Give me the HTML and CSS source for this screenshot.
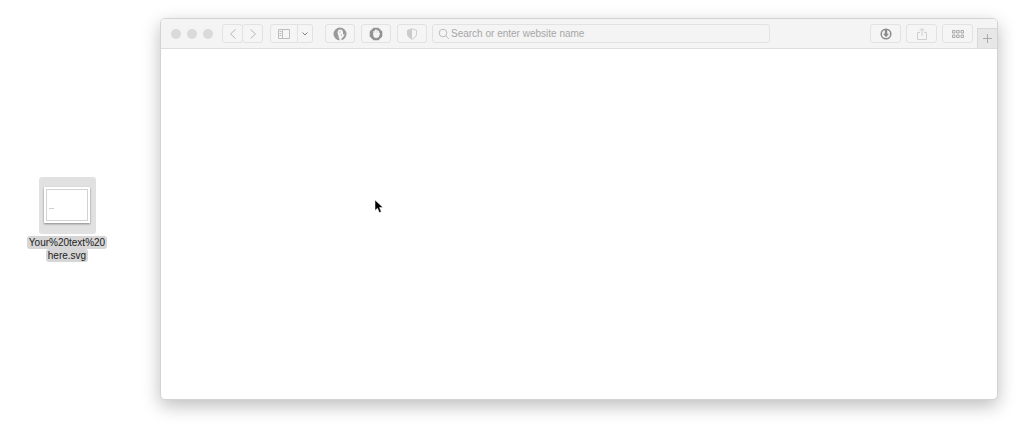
FILE: index.html
```
<!DOCTYPE html>
<html lang="en">
<head>
  <meta charset="UTF-8">
  <meta name="viewport" content="width=device-width, initial-scale=1.0">
  <title>Desktop</title>
  <link rel="stylesheet" href="styles.css">
</head>
<body>

  <aside class="desktop">
    <a class="file" href="#">
      <span class="file-icon">
        <svg width="46" height="36" viewBox="0 0 46 36">
          <rect width="46" height="36" fill="#fff"/>
          <rect x="2.5" y="2.5" width="41" height="31" fill="none" stroke="#d2d2d2"/>
          <path d="M5 21.5h5" stroke="#d0d0d0"/>
        </svg>
      </span>
      <span class="file-name"><span>Your%20text%20<br>here.svg</span></span>
    </a>
  </aside>

  <main class="window">
    <header class="toolbar">
      <div class="lights"><i></i><i></i><i></i></div>

      <div class="group nav">
        <button aria-label="Back"><svg width="18" height="16" viewBox="0 0 18 16"><path d="M11.5 3.500L6.500 8l5 4.500"/></svg></button>
        <button aria-label="Forward"><svg width="18" height="16" viewBox="0 0 18 16"><path d="M6.500 3.500l5 4.500-5 4.500"/></svg></button>
      </div>

      <div class="group split">
        <button class="sidebar" aria-label="Sidebar"><svg width="14" height="12" viewBox="0 0 14 12"><path d="M1.5 1.5h11v9h-11zM5.5 1.5v9M2.5 3.5h2M2.5 5.5h2M2.5 7.5h2"/></svg></button>
        <button class="arrow" aria-label="Sidebar options"><svg width="8" height="6" viewBox="0 0 8 6"><path d="M1.5 1.5L4 4l2.5-2.5"/></svg></button>
      </div>

      <div class="extensions">
        <button aria-label="Privacy">
          <svg width="14" height="14" viewBox="0 0 14 14">
            <circle cx="7" cy="7" r="5.500" stroke="#999" stroke-width="2"/>
            <path d="M2 4.500C3 2 5 1.500 6.500 2L5 3.500 4.500 6l1 3 .5 4C3 12 1.500 9 2 4.500z" fill="#999" stroke="none"/>
            <path d="M9 2.500c2 1 3 2.500 3.200 4.500l-2.200.5V5zM10 9.500l2 .5-2 2z" fill="#999" stroke="none"/>
            <path d="M6.500 5h1M8.500 7.500v1" stroke="#999"/>
            <path d="M7.500 10v4" stroke="#f4f4f4" stroke-width="2"/>
          </svg>
        </button>
        <button aria-label="Content blocker">
          <svg width="14" height="14" viewBox="0 0 14 14">
            <path d="M4.500.7h5l3.800 3.800v5l-3.800 3.800h-5L.7 9.500v-5z" fill="#929292" stroke="none"/>
            <path d="M5 7V4.500M6.500 6.500V3.200M8 6.500V3.200M9.500 7V4.500" stroke="#f4f4f4" stroke-width="1.400" stroke-linecap="round"/>
            <path d="M4.300 6h5.900l.8-.3-.6 3.100C9.700 10.300 8.700 11 7.300 11 5.500 11 4.300 10 4.300 8.300z" fill="#f4f4f4" stroke="none"/>
          </svg>
        </button>
        <button aria-label="Privacy report">
          <svg width="12" height="12" viewBox="0 0 12 12">
            <path d="M6 .8l4.500 1.500v3.500c0 2.500-1.800 4.300-4.500 5.500-2.700-1.200-4.500-3-4.500-5.500V2.300z" stroke="#cbcbcb"/>
            <path d="M6 1v10C3.500 10 1.700 8.200 1.700 5.800V2.500z" fill="#cbcbcb" stroke="none"/>
          </svg>
        </button>
      </div>

      <label class="search">
        <svg width="12" height="12" viewBox="0 0 12 12"><circle cx="5" cy="5" r="3.800"/><path d="M7.800 7.800l3 3"/></svg>
        <input type="text" placeholder="Search or enter website name" aria-label="Address">
      </label>

      <div class="actions">
        <button aria-label="Downloads">
          <svg width="12" height="12" viewBox="0 0 12 12">
            <circle cx="6" cy="6" r="4.800" stroke="#8b8b8b" stroke-width="1.500"/>
            <path d="M4.800 1h2.400v4.800H9L6 9.200 3 5.800h1.800z" fill="#8b8b8b" stroke="none"/>
          </svg>
        </button>
        <button aria-label="Share">
          <svg width="12" height="14" viewBox="0 0 12 14"><path d="M4 5.500H1.500v7h9v-7H8M6 9V1.500M3.500 4L6 1.500 8.500 4" stroke="#cfcfcf"/></svg>
        </button>
        <button aria-label="Tab overview">
          <svg width="12" height="10" viewBox="0 0 12 10" class="tiles"><path d="M.5 1.500h2.500v2.500H.5zM4.700 1.500h2.500v2.500H4.700zM9 1.500h2.500v2.500H9zM.5 6h2.500v2.500H.5zM4.700 6h2.500v2.500H4.700zM9 6h2.500v2.500H9z"/></svg>
        </button>
      </div>

      <button class="new-tab" aria-label="New tab"><svg width="11" height="11" viewBox="0 0 11 11"><path d="M5.500 1v9M1 5.500h9"/></svg></button>
    </header>
  </main>

  <!-- mouse pointer, floats over the window -->
  <svg class="pointer" width="10" height="15" viewBox="0 0 10 15">
    <path d="M1 1v10.500l2.500-2.300 1.800 4.300 2-.8-1.800-4.200H9z" fill="#000" stroke="#fff" stroke-width=".5"/>
  </svg>

</body>
</html>
```
FILE: styles.css
```
* {
  box-sizing: border-box;
}

body {
  display: flex;
  gap: 52px;
  min-height: 100vh;
  margin: 0;
  padding: 18px 26px 27px;
  background: #fff;
  font-family: "Liberation Sans", Arial, sans-serif;
}

button {
  display: flex;
  align-items: center;
  justify-content: center;
  width: 31px;
  height: 19px;
  padding: 0;
  background: #f5f5f5;
  border: 1px solid #e2e2e2;
  border-radius: 3px;
}

svg {
  display: block;
  flex: none;
  fill: none;
  stroke: #bdbdbd;
}

/* Desktop file */
.desktop {
  display: flex;
  flex: none;
  align-items: center;
  width: 82px;
}

.file {
  display: flex;
  flex-direction: column;
  align-items: center;
  gap: 2px;
  width: 82px;
  padding-top: 20px;
  color: #222;
  text-decoration: none;
}

.file-icon {
  display: flex;
  align-items: center;
  justify-content: center;
  width: 57px;
  height: 57px;
  background: #e1e1e1;
  border-radius: 3px;
}

.file-icon svg {
  stroke: none;
  box-shadow: 0 1px 2px rgba(0, 0, 0, 0.4);
}

.file-name {
  font-size: 10px;
  line-height: 13px;
  text-align: center;
  white-space: nowrap;
}

.file-name span {
  padding: 1px 2px;
  background: #d6d6d6;
  border-radius: 3px;
  -webkit-box-decoration-break: clone;
  box-decoration-break: clone;
}

/* Browser window */
.window {
  flex: 1;
  min-width: 0;
  background: #fff;
  border: 1px solid #d3d3d3;
  border-radius: 5px;
  box-shadow: 0 6px 18px rgba(0, 0, 0, 0.26);
}

.toolbar {
  display: flex;
  align-items: center;
  height: 30px;
  padding-left: 10px;
  background: #f4f4f4;
  border-bottom: 1px solid #dedede;
  border-radius: 4px 4px 0 0;
}

.lights {
  display: flex;
  gap: 6px;
  margin-right: 9px;
}

.lights i {
  width: 10px;
  height: 10px;
  background: #dadada;
  border-radius: 50%;
}

.group {
  display: flex;
}

.nav button {
  width: 21px;
}

.nav button + button {
  margin-left: -1px;
}

.nav svg {
  stroke: #b8b8b8;
}

.split {
  margin: 0 12px 0 7px;
}

.split .sidebar {
  width: 28px;
  border-radius: 3px 0 0 3px;
}

.split .arrow {
  width: 15px;
  border-left: 0;
  border-radius: 0 3px 3px 0;
}

.arrow svg {
  stroke: #808080;
}

.extensions,
.actions {
  display: flex;
  gap: 5px;
}

.extensions button {
  width: 30px;
}

.extensions {
  gap: 6px;
}

.search {
  display: flex;
  flex: 1;
  align-items: center;
  gap: 1px;
  height: 19px;
  margin: 0 100px 0 5px;
  padding: 0 5px;
  border: 1px solid #e2e2e2;
  border-radius: 3px;
}

.search input {
  flex: 1;
  min-width: 0;
  padding: 0;
  background: none;
  border: 0;
  outline: 0;
  font-family: inherit;
  font-size: 10px;
}

.search input::placeholder {
  color: #a6a6a6;
}

.tiles {
  stroke: #a9a9a9;
}

.new-tab {
  align-self: flex-end;
  width: 20px;
  height: 20px;
  margin-left: 4px;
  background: #e7e7e7;
  border-color: #d8d8d8;
  border-width: 1px 0 0 1px;
  border-radius: 0;
}

.new-tab svg {
  stroke: #aaa;
}

.pointer {
  position: absolute;
  top: 199px;
  left: 374px;
}
```
